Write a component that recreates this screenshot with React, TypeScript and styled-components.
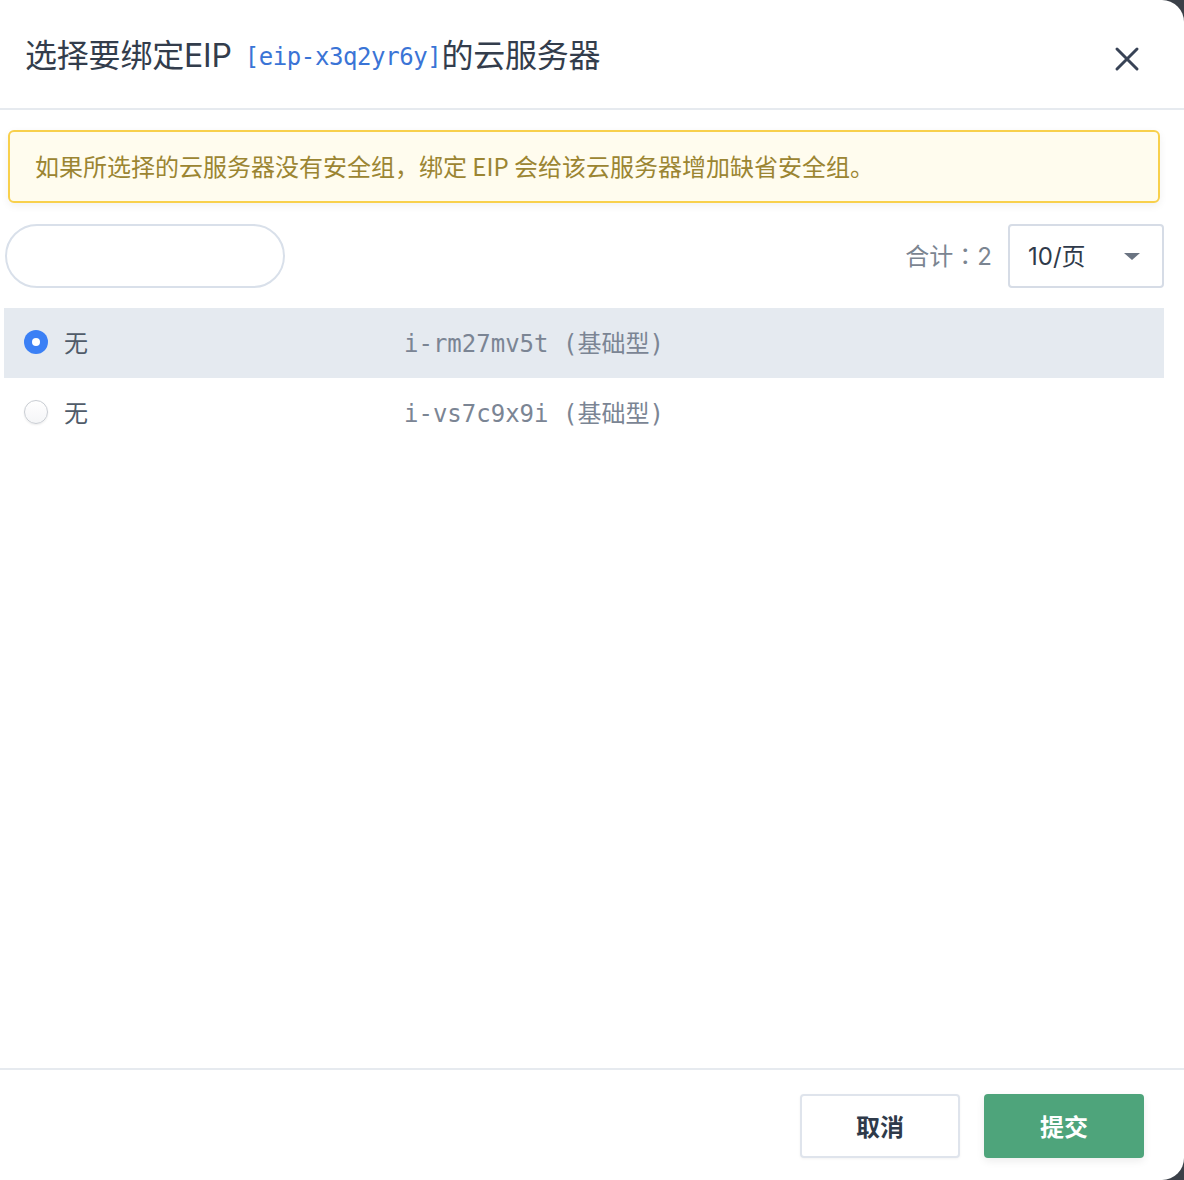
import React, { useState } from 'react'
import styled, { createGlobalStyle } from 'styled-components'

const GlobalStyle = createGlobalStyle`
    html, body {
        margin: 0;
        padding: 0;
        background: #3b4048;
    }
    body {
        font-family: Inter, "Noto Sans CJK SC", sans-serif;
    }
`

const Modal = styled.div`
    width: 1184px;
    height: 1180px;
    background: #fff;
    border-top-right-radius: 22px;
    border-bottom-right-radius: 22px;
    display: flex;
    flex-direction: column;
    overflow: hidden;
`

const Header = styled.div`
    height: 110px;
    flex: none;
    display: flex;
    align-items: center;
    justify-content: space-between;
    padding: 0 44px 0 25px;
    border-bottom: 2px solid #e6eaef;
    box-sizing: border-box;
`

const Title = styled.div`
    font-size: 32px;
    color: #333d4c;
    font-family: Inter, "Noto Sans CJK SC", sans-serif;
    margin-top: -3px;
    letter-spacing: -0.2px;
`

const Code = styled.span`
    font-family: "DejaVu Sans Mono", "Noto Sans CJK SC", monospace;
    font-size: 24px;
    color: #3a74d6;
    margin-left: 13px;
    letter-spacing: -0.4px;
    vertical-align: 2px;
`

const CloseButton = styled.button`
    border: none;
    background: none;
    padding: 0;
    width: 26px;
    height: 26px;
    cursor: pointer;
    margin-top: 10px;
`

const Body = styled.div`
    flex: 1;
    padding: 20px 20px 0 4px;
    display: flex;
    flex-direction: column;
`

const Alert = styled.div`
    margin: 0 4px 0 4px;
    height: 73px;
    box-sizing: border-box;
    border: 2px solid #f8d04c;
    border-radius: 6px;
    background: #fffcee;
    box-shadow: 0 3px 8px rgba(0, 0, 0, 0.06);
    display: flex;
    align-items: center;
    padding: 0 25px 2px;
    font-size: 24px;
    color: #9b8532;
    font-family: "Noto Sans CJK SC", sans-serif;
`

const Toolbar = styled.div`
    margin-top: 21px;
    display: flex;
    align-items: center;
    justify-content: space-between;
`

const SearchInput = styled.input`
    width: 280px;
    height: 64px;
    box-sizing: border-box;
    margin-left: 1px;
    border: 2px solid #d9e0ea;
    border-radius: 32px;
    outline: none;
    padding: 0 24px;
    font-size: 22px;
`

const Pager = styled.div`
    display: flex;
    align-items: center;
    gap: 16px;
`

const Total = styled.span`
    font-size: 24px;
    color: #7b8591;
    font-family: Inter, "Noto Sans CJK TC", sans-serif;
    padding-bottom: 4px;
`

const SelectBox = styled.div`
    width: 156px;
    height: 64px;
    box-sizing: border-box;
    border: 2px solid #d6dce6;
    border-radius: 4px;
    display: flex;
    align-items: center;
    justify-content: space-between;
    padding: 0 22px 3px 18px;
    font-size: 24px;
    color: #2f3a4a;
`

const Caret = styled.span`
    width: 0;
    height: 0;
    margin-top: 3px;
    border-left: 8px solid transparent;
    border-right: 8px solid transparent;
    border-top: 7px solid #6b7482;
`

const List = styled.div`
    margin-top: 20px;
    display: flex;
    flex-direction: column;
`

const Row = styled.label<{ $selected: boolean }>`
    height: 70px;
    box-sizing: border-box;
    padding-bottom: 3px;
    display: grid;
    grid-template-columns: 400px 1fr;
    align-items: center;
    background: ${p => (p.$selected ? '#e5eaf0' : 'transparent')};
    cursor: pointer;
`

const NameCell = styled.div`
    display: flex;
    align-items: center;
    gap: 16px;
    padding-left: 20px;
    font-size: 24px;
    color: #505b69;
    font-family: "Noto Sans CJK SC", sans-serif;
`

const Radio = styled.span<{ $checked: boolean }>`
    width: 24px;
    height: 24px;
    box-sizing: border-box;
    border-radius: 50%;
    flex: none;
    position: relative;
    background: ${p => (p.$checked ? '#3b80f5' : 'linear-gradient(#ffffff, #f4f5f7)')};
    border: ${p => (p.$checked ? 'none' : '1px solid #c9cdd3')};
    box-shadow: ${p => (p.$checked ? 'none' : '0 1px 2px rgba(0,0,0,0.08)')};

    &::after {
        content: '';
        display: ${p => (p.$checked ? 'block' : 'none')};
        position: absolute;
        left: 8px;
        top: 8px;
        width: 8px;
        height: 8px;
        border-radius: 50%;
        background: #fff;
    }
`

const IdCell = styled.div`
    font-family: "DejaVu Sans Mono", "Noto Sans CJK SC", monospace;
    font-size: 24px;
    color: #7b8594;
`

const Footer = styled.div`
    height: 112px;
    flex: none;
    box-sizing: border-box;
    border-top: 2px solid #e6eaef;
    display: flex;
    justify-content: flex-end;
    align-items: flex-start;
    gap: 24px;
    padding: 24px 40px 0 0;
`

const Button = styled.button<{ $primary?: boolean }>`
    width: 160px;
    height: 64px;
    box-sizing: border-box;
    border-radius: 4px;
    padding-bottom: 2px;
    font-size: 24px;
    font-weight: 700;
    font-family: "Noto Sans CJK SC", sans-serif;
    cursor: pointer;
    border: ${p => (p.$primary ? 'none' : '2px solid #dfe4ec')};
    background: ${p => (p.$primary ? '#4ea47b' : '#fff')};
    color: ${p => (p.$primary ? '#fff' : '#2f3a4a')};
    box-shadow: ${p => (p.$primary ? '0 3px 8px rgba(0,0,0,0.08)' : '0 1px 3px rgba(0,0,0,0.05)')};
`

const servers = [
    { name: '无', id: 'i-rm27mv5t', type: '基础型' },
    { name: '无', id: 'i-vs7c9x9i', type: '基础型' },
]

const App: React.FC = () => {
    const [selected, setSelected] = useState('i-rm27mv5t')

    return <>
        <GlobalStyle />
        <Modal>
            <Header>
                <Title>选择要绑定EIP<Code>[eip-x3q2yr6y]</Code>的云服务器</Title>
                <CloseButton aria-label="close">
                    <svg width="26" height="26" viewBox="0 0 26 26">
                        <path d="M3 3 L23 23 M23 3 L3 23" stroke="#384356" strokeWidth="3" strokeLinecap="round" />
                    </svg>
                </CloseButton>
            </Header>

            <Body>
                <Alert>如果所选择的云服务器没有安全组，绑定 EIP 会给该云服务器增加缺省安全组。</Alert>

                <Toolbar>
                    <SearchInput />
                    <Pager>
                        <Total>合计：2</Total>
                        <SelectBox>
                            <span>10/页</span>
                            <Caret />
                        </SelectBox>
                    </Pager>
                </Toolbar>

                <List>
                    {servers.map(server =>
                        <Row key={server.id} $selected={selected === server.id} onClick={() => setSelected(server.id)}>
                            <NameCell>
                                <Radio $checked={selected === server.id} />
                                {server.name}
                            </NameCell>
                            <IdCell>{server.id} ({server.type})</IdCell>
                        </Row>
                    )}
                </List>
            </Body>

            <Footer>
                <Button>取消</Button>
                <Button $primary>提交</Button>
            </Footer>
        </Modal>
    </>
}

export default App
